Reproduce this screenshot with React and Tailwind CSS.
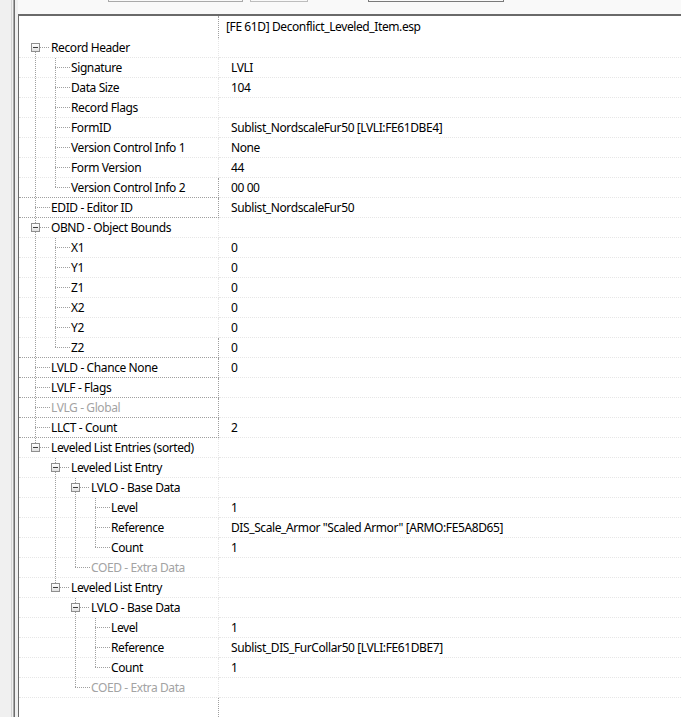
import React from 'react'

const rows = [
  { l: 0, label: 'Record Header', exp: true },
  { l: 1, label: 'Signature', value: 'LVLI' },
  { l: 1, label: 'Data Size', value: '104' },
  { l: 1, label: 'Record Flags' },
  { l: 1, label: 'FormID', value: 'Sublist_NordscaleFur50 [LVLI:FE61DBE4]' },
  { l: 1, label: 'Version Control Info 1', value: 'None' },
  { l: 1, label: 'Form Version', value: '44' },
  { l: 1, label: 'Version Control Info 2', value: '00 00' },
  { l: 0, label: 'EDID - Editor ID', value: 'Sublist_NordscaleFur50' },
  { l: 0, label: 'OBND - Object Bounds', exp: true },
  { l: 1, label: 'X1', value: '0' },
  { l: 1, label: 'Y1', value: '0' },
  { l: 1, label: 'Z1', value: '0' },
  { l: 1, label: 'X2', value: '0' },
  { l: 1, label: 'Y2', value: '0' },
  { l: 1, label: 'Z2', value: '0' },
  { l: 0, label: 'LVLD - Chance None', value: '0' },
  { l: 0, label: 'LVLF - Flags' },
  { l: 0, label: 'LVLG - Global', dim: true },
  { l: 0, label: 'LLCT - Count', value: '2' },
  { l: 0, label: 'Leveled List Entries (sorted)', exp: true },
  { l: 1, label: 'Leveled List Entry', exp: true },
  { l: 2, label: 'LVLO - Base Data', exp: true },
  { l: 3, label: 'Level', value: '1' },
  { l: 3, label: 'Reference', value: 'DIS_Scale_Armor "Scaled Armor" [ARMO:FE5A8D65]' },
  { l: 3, label: 'Count', value: '1' },
  { l: 2, label: 'COED - Extra Data', dim: true },
  { l: 1, label: 'Leveled List Entry', exp: true },
  { l: 2, label: 'LVLO - Base Data', exp: true },
  { l: 3, label: 'Level', value: '1' },
  { l: 3, label: 'Reference', value: 'Sublist_DIS_FurCollar50 [LVLI:FE61DBE7]' },
  { l: 3, label: 'Count', value: '1' },
  { l: 2, label: 'COED - Extra Data', dim: true },
]

// does row i have a later sibling at its own level
const hasNext = (i) => {
  const l = rows[i].l
  for (let j = i + 1; j < rows.length; j++) {
    if (rows[j].l < l) return false
    if (rows[j].l === l) return true
  }
  return false
}

const guides = (i) => {
  const out = []
  for (let k = 0; k < rows[i].l; k++) {
    let a = i - 1
    while (a >= 0 && rows[a].l !== k) a--
    out.push(a >= 0 && hasNext(a))
  }
  return out
}

const vline = 'ml-[4px] border-l border-dotted border-[#a0a0a0]'

const Connector = ({ top, next, exp }) => (
  <div className="w-[20px] h-full flex flex-col shrink-0">
    {exp ? (
      <>
        <div className={'h-[5px] ' + (top ? vline : '')} />
        <div className="h-[9px] flex items-center">
          <div className="w-[9px] h-[9px] border border-[#8f8f8f] bg-gradient-to-b from-white to-[#e2e2e2] flex items-center justify-center">
            <div className="w-[5px] h-px bg-[#3c3c3c]" />
          </div>
          <div className="w-[9px] border-t border-dotted border-[#a0a0a0]" />
        </div>
        <div className={'flex-1 ' + (next ? vline : '')} />
      </>
    ) : (
      <>
        <div className={'h-[9px] ' + (top ? vline : '')} />
        <div className="ml-[4px] w-[15px] border-t border-dotted border-[#a0a0a0]" />
        <div className={'flex-1 ' + (next ? vline : '')} />
      </>
    )}
  </div>
)

const Row = ({ r, i }) => {
  const g = guides(i)
  const dark = r.l === 0 && !r.exp
  const nextDark = rows[i + 1] && rows[i + 1].l === 0 && !rows[i + 1].exp
  const leftLine = dark || nextDark ? 'border-[#a0a0a0]' : 'border-[#e6e6e6]'
  return (
    <div className="flex h-[20px]">
      <div className={'w-[200px] shrink-0 flex border-b border-r border-dotted ' + leftLine}>
        <div className="w-[12px] shrink-0" />
        {g.map((on, k) => (
          <div key={k} className="w-[20px] shrink-0 h-full">
            {on && <div className={'h-full ' + vline} />}
          </div>
        ))}
        <Connector top={i > 0} next={hasNext(i)} exp={r.exp} />
        <div className={'leading-[19px] whitespace-nowrap ' + (r.dim ? 'text-[#a3a3a3]' : 'text-black')}>
          {r.label}
        </div>
      </div>
      <div className="flex-1 border-b border-dotted border-[#e6e6e6] pl-[12px] leading-[19px] whitespace-nowrap text-black">
        {r.value}
      </div>
    </div>
  )
}

export default function App() {
  return (
    <div
      className="w-[681px] h-[717px] overflow-hidden flex bg-[#f0f0f0] text-[12px] tracking-[-0.4px]"
      style={{ fontFamily: '"Noto Sans", "Open Sans", sans-serif' }}
    >
      <div className="w-[18px] shrink-0 flex">
        <div className="w-[11px] bg-[#f0f0f0]" />
        <div className="w-px bg-[#d4d4d4]" />
        <div className="w-px bg-[#f0f0f0]" />
        <div className="w-px bg-[#a8a8a8]" />
        <div className="w-px bg-[#6e6e6e]" />
        <div className="w-[3px] bg-[#f0f0f0]" />
      </div>
      <div className="flex-1 flex flex-col min-w-0">
        <div className="h-[14px] bg-[#f9f9f9] flex shrink-0">
          <div className="ml-[90px] w-[135px] h-[2px] border-x border-b border-[#a9a9a9]" />
          <div className="ml-[7px] w-[58px] h-[2px] border-x border-b border-[#bdbdbd]" />
          <div className="ml-[60px] w-[136px] h-[2px] border-x border-b border-[#7a7a7a]" />
        </div>
        <div className="flex-1 bg-white border-t-2 border-l border-[#6a6a6a] flex flex-col">
          <div className="flex h-[22px] shrink-0">
            <div className="w-[200px] shrink-0 border-r border-dotted border-[#a0a0a0]" />
            <div className="flex-1 pl-[7px] pt-[1px] leading-[20px] whitespace-nowrap text-black">
              [FE 61D] Deconflict_Leveled_Item.esp
            </div>
          </div>
          {rows.map((r, i) => (
            <Row key={i} r={r} i={i} />
          ))}
          <div className="flex flex-1">
            <div className="w-[200px] shrink-0 border-r border-dotted border-[#a0a0a0]" />
          </div>
        </div>
      </div>
    </div>
  )
}
